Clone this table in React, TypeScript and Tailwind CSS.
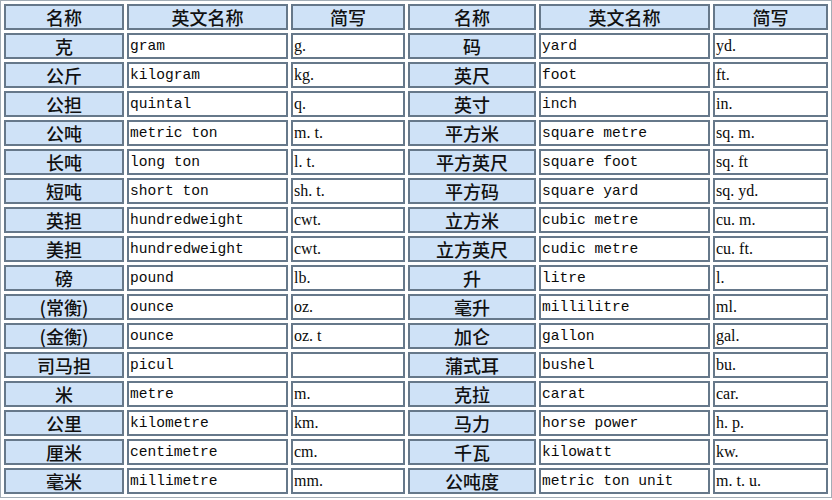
const rows: [string, string, string, string, string, string][] = [
  ['克', 'gram', 'g.', '码', 'yard', 'yd.'],
  ['公斤', 'kilogram', 'kg.', '英尺', 'foot', 'ft.'],
  ['公担', 'quintal', 'q.', '英寸', 'inch', 'in.'],
  ['公吨', 'metric ton', 'm.t.', '平方米', 'square metre', 'sq.m.'],
  ['长吨', 'long ton', 'l.t.', '平方英尺', 'square foot', 'sq.ft'],
  ['短吨', 'short ton', 'sh.t.', '平方码', 'square yard', 'sq.yd.'],
  ['英担', 'hundredweight', 'cwt.', '立方米', 'cubic metre', 'cu.m.'],
  ['美担', 'hundredweight', 'cwt.', '立方英尺', 'cudic metre', 'cu.ft.'],
  ['磅', 'pound', 'lb.', '升', 'litre', 'l.'],
  ['(常衡)', 'ounce', 'oz.', '毫升', 'millilitre', 'ml.'],
  ['(金衡)', 'ounce', 'oz.t', '加仑', 'gallon', 'gal.'],
  ['司马担', 'picul', '', '蒲式耳', 'bushel', 'bu.'],
  ['米', 'metre', 'm.', '克拉', 'carat', 'car.'],
  ['公里', 'kilometre', 'km.', '马力', 'horse power', 'h.p.'],
  ['厘米', 'centimetre', 'cm.', '千瓦', 'kilowatt', 'kw.'],
  ['毫米', 'millimetre', 'mm.', '公吨度', 'metric ton unit', 'm.t.u.'],
];

const cell = 'h-[26px] border-2 border-[#66788a] p-0 leading-none';
const cn =
  "bg-[#cfe2f7] text-center text-[18px] font-medium text-[#111] [font-family:'Noto_Sans_CJK_SC',sans-serif]";
const en = "bg-white pl-[1px] text-left text-[14.6px] text-[#0a0a0a] [font-family:'Liberation_Mono',monospace]";
const ab = "bg-white pl-[1px] text-left text-[16px] text-[#0a0a0a] [font-family:'Liberation_Serif',serif]";

function Abbr({ text }: { text: string }) {
  const parts = text.split('.');
  return (
    <>
      {parts.map((p, i) => (
        <span key={i}>
          {p}
          {i < parts.length - 1 ? (
            <span className={parts[i + 1] ? 'mr-[4px]' : ''}>.</span>
          ) : null}
        </span>
      ))}
    </>
  );
}

export default function App() {
  return (
    <div className="h-[500px] w-[832px] overflow-hidden bg-white">
      <table className="w-[832px] table-fixed border-separate border-spacing-x-[3px] border-spacing-y-[3.1px] border border-[#a3adb6]">
        <colgroup>
          <col className="w-[120px]" />
          <col className="w-[161px]" />
          <col className="w-[114px]" />
          <col className="w-[128px]" />
          <col className="w-[171px]" />
          <col className="w-[115px]" />
        </colgroup>
        <thead>
          <tr>
            {['名称', '英文名称', '简写', '名称', '英文名称', '简写'].map((h, i) => (
              <th key={i} className={`${cell} ${cn}`}>
                {h}
              </th>
            ))}
          </tr>
        </thead>
        <tbody>
          {rows.map((r, i) => (
            <tr key={i}>
              <td className={`${cell} ${cn}`}>{r[0]}</td>
              <td className={`${cell} ${en}`}>{r[1]}</td>
              <td className={`${cell} ${ab}`}>
                <Abbr text={r[2]} />
              </td>
              <td className={`${cell} ${cn}`}>{r[3]}</td>
              <td className={`${cell} ${en}`}>{r[4]}</td>
              <td className={`${cell} ${ab}`}>
                <Abbr text={r[5]} />
              </td>
            </tr>
          ))}
        </tbody>
      </table>
    </div>
  );
}
